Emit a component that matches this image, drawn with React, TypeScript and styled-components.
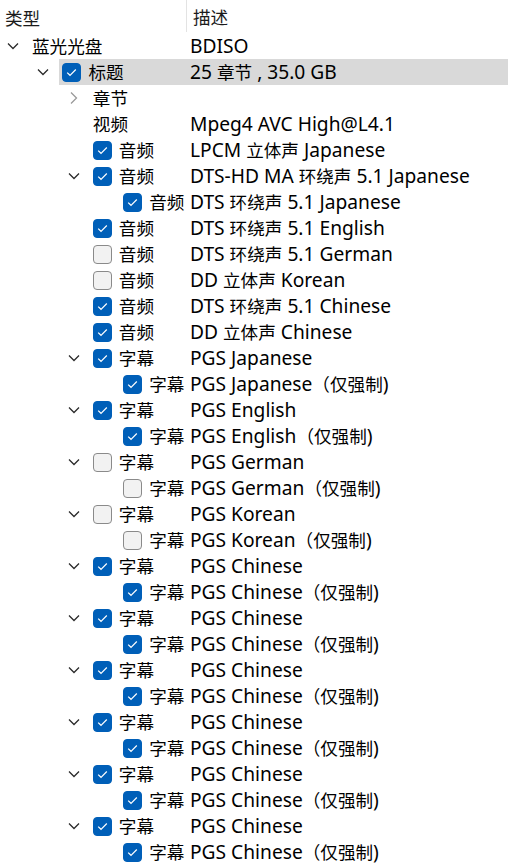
import React from "react";
import styled, { createGlobalStyle } from "styled-components";

const Global = createGlobalStyle`
  html, body { margin: 0; padding: 0; background: #ffffff; }
  body {
    font-family: "Noto Sans", "Noto Sans CJK SC", sans-serif;
    color: #000000;
    -webkit-font-smoothing: antialiased;
  }
`;

const STEP = 30.4;
const SPLIT = 190;

type Node = {
  level: number;
  name: string;
  desc?: string;
  check?: boolean | null; // null = no checkbox
  expander?: "open" | "closed" | null;
  selected?: boolean;
};

const rows: Node[] = [];
rows.push({ level: 0, name: "蓝光光盘", desc: "BDISO", check: null, expander: "open" });
rows.push({ level: 1, name: "标题", desc: "25 章节 , 35.0 GB", check: true, expander: "open", selected: true });
rows.push({ level: 2, name: "章节", check: null, expander: "closed" });
rows.push({ level: 2, name: "视频", desc: "Mpeg4 AVC High@L4.1", check: null });
rows.push({ level: 2, name: "音频", desc: "LPCM 立体声 Japanese", check: true });
rows.push({ level: 2, name: "音频", desc: "DTS-HD MA 环绕声 5.1 Japanese", check: true, expander: "open" });
rows.push({ level: 3, name: "音频", desc: "DTS 环绕声 5.1 Japanese", check: true });
rows.push({ level: 2, name: "音频", desc: "DTS 环绕声 5.1 English", check: true });
rows.push({ level: 2, name: "音频", desc: "DTS 环绕声 5.1 German", check: false });
rows.push({ level: 2, name: "音频", desc: "DD 立体声 Korean", check: false });
rows.push({ level: 2, name: "音频", desc: "DTS 环绕声 5.1 Chinese", check: true });
rows.push({ level: 2, name: "音频", desc: "DD 立体声 Chinese", check: true });
const subs: [string, boolean][] = [
  ["Japanese", true],
  ["English", true],
  ["German", false],
  ["Korean", false],
  ["Chinese", true],
  ["Chinese", true],
  ["Chinese", true],
  ["Chinese", true],
  ["Chinese", true],
  ["Chinese", true],
];
subs.forEach(([lang, c]) => {
  rows.push({ level: 2, name: "字幕", desc: `PGS ${lang}`, check: c, expander: "open" });
  rows.push({ level: 3, name: "字幕", desc: `PGS ${lang}（仅强制)`, check: c });
});

const Tree = styled.div`
  width: 508px;
  font-size: 17.6px;
  line-height: 26px;
`;

const Header = styled.div`
  display: flex;
  height: 33px;
  align-items: stretch;
`;

const HeaderCell = styled.div<{ $w?: number }>`
  ${(p) => (p.$w ? `width: ${p.$w}px; flex: 0 0 ${p.$w}px;` : "flex: 1;")}
  padding-left: 5px;
  padding-top: 2px;
  box-sizing: border-box;
  display: flex;
  align-items: center;
  color: #1b1b1b;
  & + & { border-left: 1px solid #e3e3e3; padding-left: 6px; height: 32px; }
`;

const Row = styled.div`
  display: flex;
  height: 26px;
  align-items: stretch;
`;

const Indent = styled.div<{ $level: number }>`
  flex: 0 0 ${(p) => p.$level * STEP}px;
`;

const Expander = styled.div`
  flex: 0 0 28.5px;
  display: flex;
  align-items: center;
  padding-left: 7px;
  box-sizing: border-box;
`;

const Body = styled.div<{ $selected?: boolean }>`
  flex: 1;
  display: flex;
  align-items: center;
  background: ${(p) => (p.$selected ? "#d9d9d9" : "transparent")};
`;

const NameCell = styled.div<{ $level: number }>`
  flex: 0 0 ${(p) => SPLIT - p.$level * STEP - 28.5}px;
  display: flex;
  align-items: center;
  padding-left: 3.5px;
  box-sizing: border-box;
  white-space: nowrap;
  overflow: hidden;
`;

const Box = styled.span<{ $on: boolean }>`
  flex: 0 0 auto;
  width: 19px;
  height: 19px;
  box-sizing: border-box;
  border-radius: 4px;
  margin-right: 7px;
  display: inline-flex;
  align-items: center;
  justify-content: center;
  background: ${(p) => (p.$on ? "#005fb8" : "#f2f2f2")};
  border: 1px solid ${(p) => (p.$on ? "#005fb8" : "#8a8a8a")};
`;

const Label = styled.span`
  white-space: nowrap;
`;

const Desc = styled.span`
  white-space: nowrap;
`;

const Latin = styled.span`
  font-size: 19.2px;
`;

const CJK_RE = /([\u3000-\u9fff\uff00-\uffef]+)/;

const Mixed = ({ text }: { text: string }) => (
  <>
    {text.split(CJK_RE).map((part, i) =>
      part === "" ? null : CJK_RE.test(part) ? (
        <React.Fragment key={i}>{part}</React.Fragment>
      ) : (
        <Latin key={i}>{part}</Latin>
      )
    )}
  </>
);

const Chevron = ({ open }: { open: boolean }) =>
  open ? (
    <svg width="12" height="8" viewBox="0 0 12 8">
      <path d="M1 1.5 L6 6.5 L11 1.5" fill="none" stroke="#2b2b2b" strokeWidth="1.3" />
    </svg>
  ) : (
    <svg width="10" height="14" viewBox="0 0 10 14" style={{ marginLeft: 1 }}>
      <path d="M2 1.5 L7.5 7 L2 12.5" fill="none" stroke="#9a9a9a" strokeWidth="1.3" />
    </svg>
  );

const Check = () => (
  <svg width="11" height="9" viewBox="0 0 11 9">
    <path d="M1.2 4.6 L4 7.3 L9.8 1.5" fill="none" stroke="#ffffff" strokeWidth="1.2" />
  </svg>
);

export default function App() {
  return (
    <>
      <Global />
      <Tree>
        <Header>
          <HeaderCell $w={186}>类型</HeaderCell>
          <HeaderCell>描述</HeaderCell>
        </Header>
        {rows.map((r, i) => (
          <Row key={i}>
            <Indent $level={r.level} />
            <Expander>{r.expander ? <Chevron open={r.expander === "open"} /> : null}</Expander>
            <Body $selected={r.selected}>
              <NameCell $level={r.level}>
                {r.check !== null && r.check !== undefined ? (
                  <Box $on={r.check}>{r.check ? <Check /> : null}</Box>
                ) : null}
                <Label>{r.name}</Label>
              </NameCell>
              {r.desc ? (
                <Desc>
                  <Mixed text={r.desc} />
                </Desc>
              ) : null}
            </Body>
          </Row>
        ))}
      </Tree>
    </>
  );
}
